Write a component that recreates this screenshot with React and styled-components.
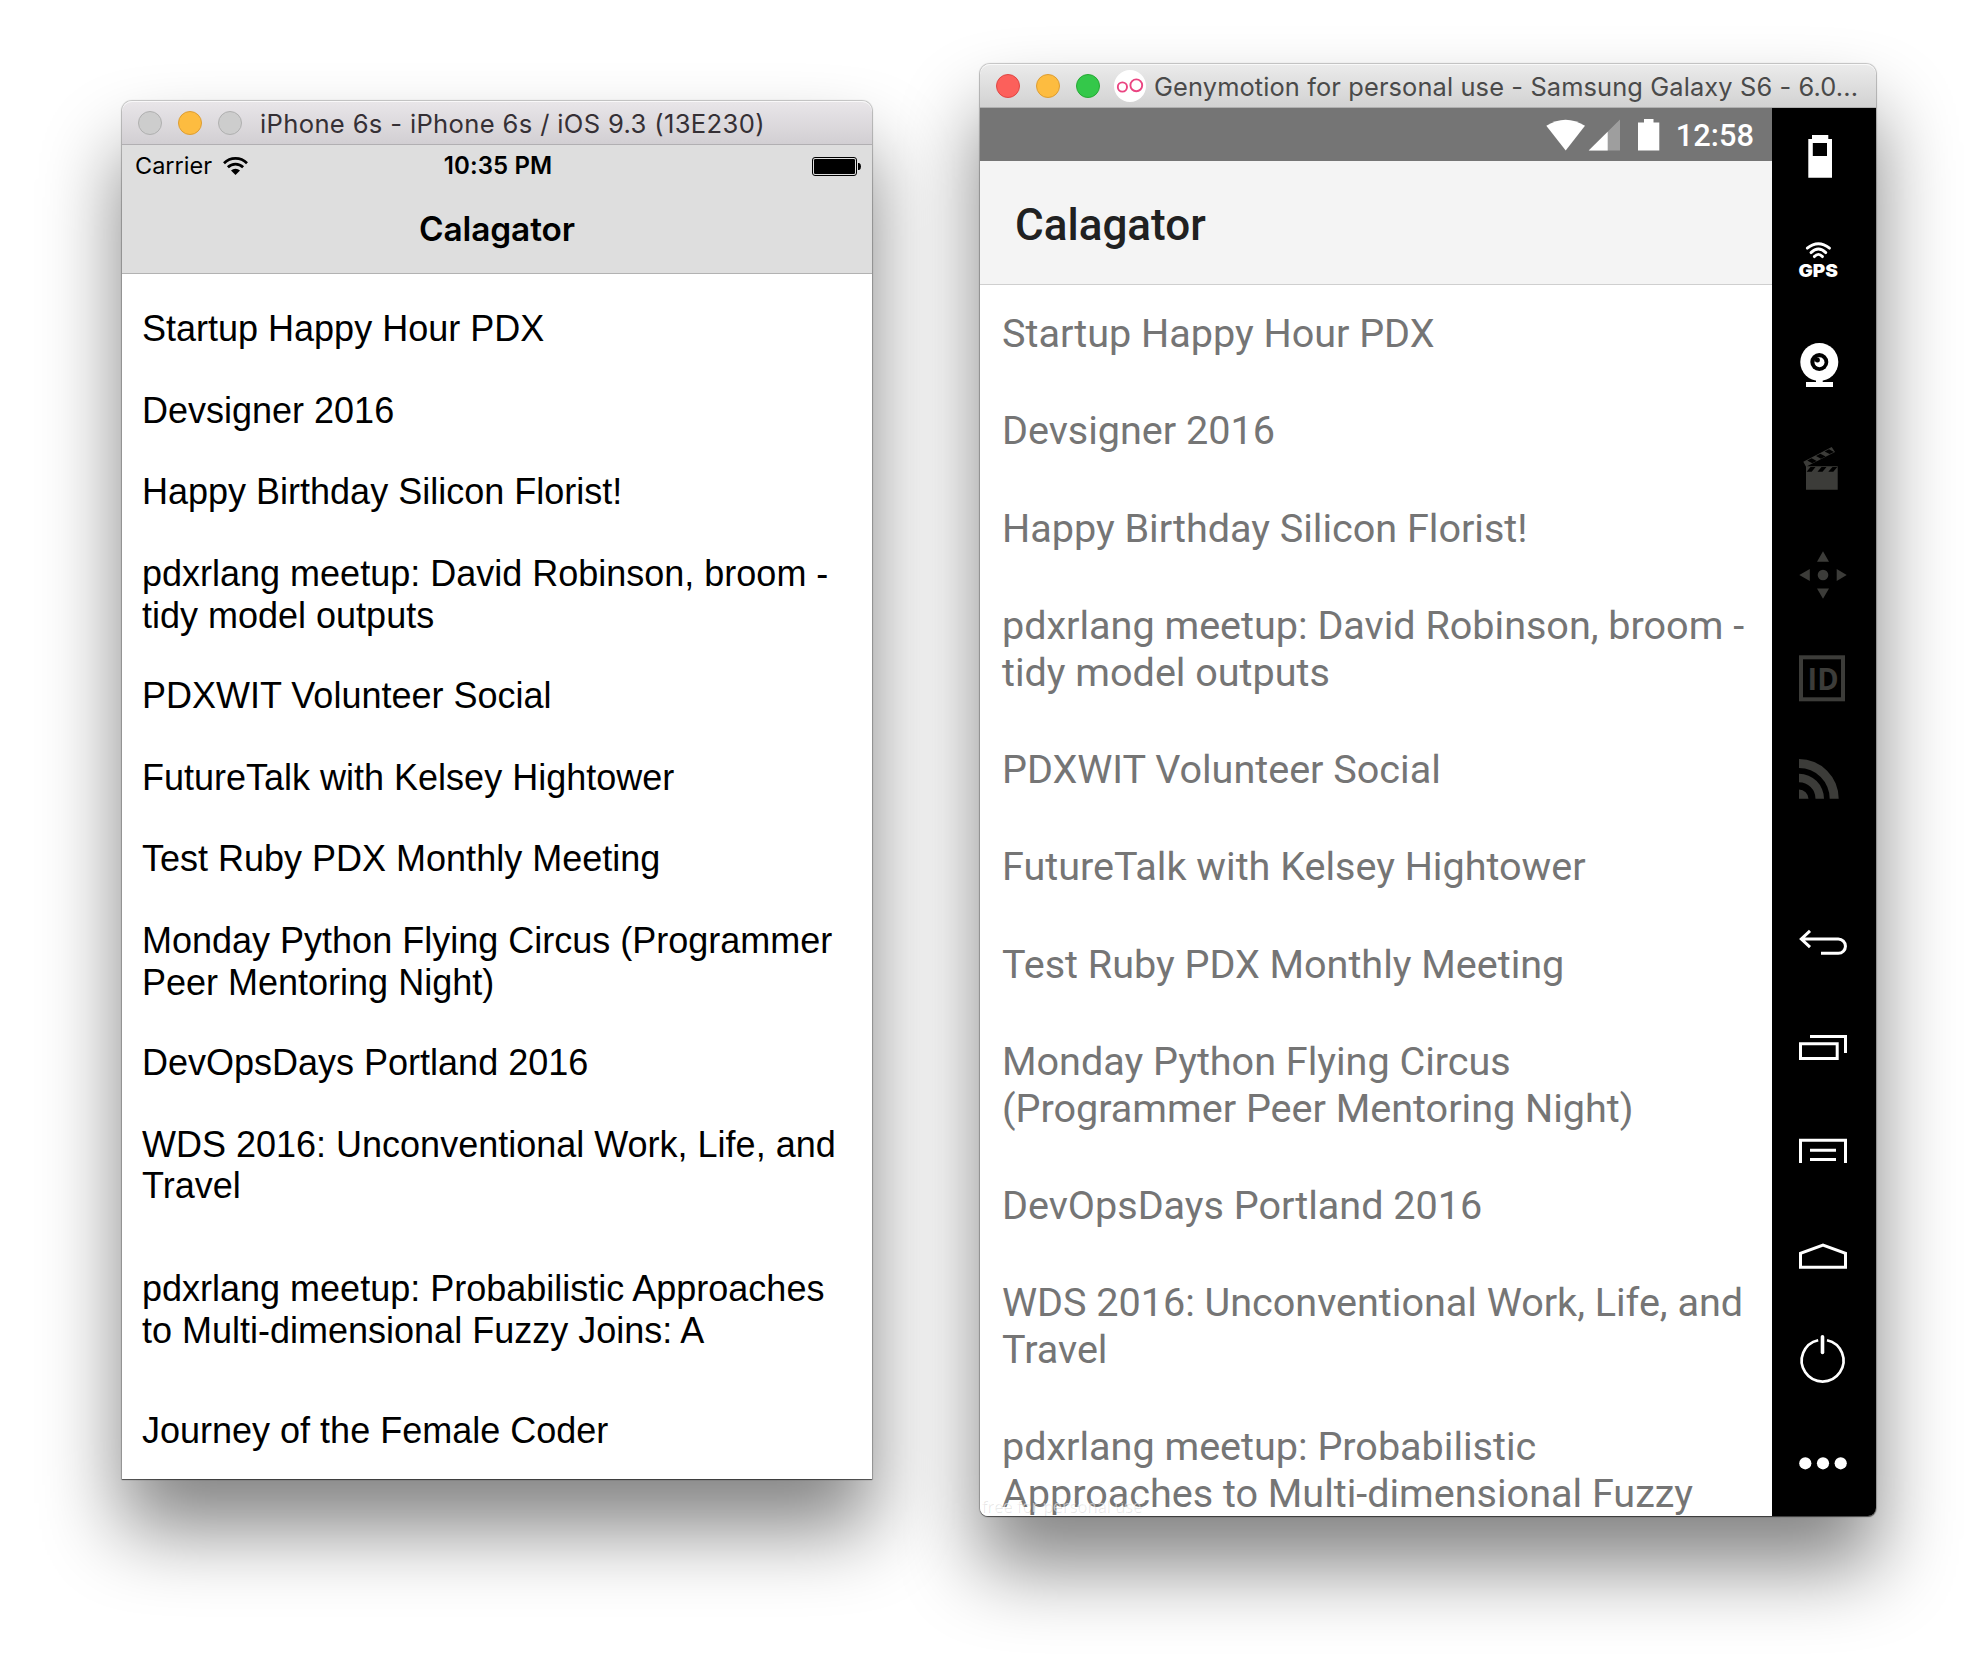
import React from "react";
import styled, { createGlobalStyle } from "styled-components";

const GlobalStyle = createGlobalStyle`
  * { box-sizing: border-box; }
  body { margin: 0; background: #fff; overflow: hidden; }
`;

const Desktop = styled.main`
  display: flex;
  align-items: flex-start;
  gap: 108px;
  width: 1988px;
  height: 1676px;
  padding: 64px 112px 0 122px;
  overflow: hidden;
  background: #fff;
`;

const Window = styled.section`
  flex: none;
  width: ${(p) => p.$width}px;
  margin-top: ${(p) => p.$drop || 0}px;
  border-radius: ${(p) => p.$radius};
  box-shadow:
    0 0 1px 1px rgba(0, 0, 0, 0.22),
    0 1px 1px rgba(0, 0, 0, 0.5),
    0 50px 80px rgba(0, 0, 0, 0.49);
`;

const TitleBar = styled.header`
  display: flex;
  align-items: center;
  height: 44px;
  padding-left: 16px;
  border-radius: 10px 10px 0 0;
  border-bottom: 1px solid ${(p) => p.$line};
  background: ${(p) => p.$fill};
  box-shadow: inset 0 1px 0 rgba(255, 255, 255, 0.7);
`;

const Lights = styled.div`
  display: flex;
  gap: 16px;
`;

const Light = styled.span`
  width: 24px;
  height: 24px;
  border-radius: 50%;
  border: 1px solid ${(p) => p.$edge};
  background: ${(p) => p.$fill};
`;

const WindowTitle = styled.h1`
  margin: 0 0 0 ${(p) => p.$gap}px;
  padding-top: 2px;
  font: 400 ${(p) => p.$size}px/44px Inter, sans-serif;
  letter-spacing: ${(p) => p.$track}px;
  color: ${(p) => p.$color};
  white-space: pre;
`;

const AppBadge = styled.svg`
  width: 32px;
  height: 32px;
  margin-left: 14px;
`;

/* iOS */

const IosScreen = styled.div`
  height: 1334px;
  overflow: hidden;
  background: #fff;
`;

const IosTop = styled.div`
  height: 129px;
  border-bottom: 1px solid #b2b2b2;
  background: #dedede;
  color: #000;
  font-family: Inter, sans-serif;
`;

const IosStatus = styled.div`
  display: grid;
  grid-template-columns: 1fr auto 1fr;
  align-items: center;
  height: 40px;
  padding: 1px 11px 0 13px;
`;

const Carrier = styled.div`
  display: flex;
  align-items: center;
  gap: 11px;
  font-size: 23.5px;
  line-height: 40px;
  letter-spacing: 0;
`;

const IosTime = styled.time`
  font-size: 24px;
  font-weight: 600;
  line-height: 40px;
  letter-spacing: 0.1px;
`;

const IosBattery = styled.svg`
  justify-self: end;
  width: 49px;
  height: 19px;
`;

const IosNavTitle = styled.h2`
  margin: 0;
  font-size: 33.4px;
  font-weight: 600;
  line-height: 88px;
  letter-spacing: -0.1px;
  text-align: center;
`;

const IosList = styled.ul`
  margin: 0;
  padding: 34px 20px 0;
  list-style: none;
`;

const IosRow = styled.li`
  height: ${(p) => p.$height}px;
  font: 400 36px/41.8px "Liberation Sans", Arial, sans-serif;
  color: #000;
  white-space: pre;
`;

/* Android */

const AndroidBody = styled.div`
  display: flex;
  height: 1408px;
  overflow: hidden;
  border-radius: 0 0 8px 8px;
`;

const AndroidScreen = styled.div`
  position: relative;
  width: 792px;
  overflow: hidden;
  background: #fff;
  font-family: Roboto, sans-serif;
`;

const AndroidStatus = styled.div`
  display: flex;
  align-items: center;
  justify-content: flex-end;
  height: 53px;
  padding-right: 18px;
  background: #757575;
  color: #fff;
`;

const StatusIcons = styled.svg`
  width: 114px;
  height: 32px;
  margin-right: 16px;
`;

const AndroidTime = styled.time`
  padding-top: 2px;
  font-size: 30.8px;
  font-weight: 500;
  line-height: 51px;
`;

const AndroidToolbar = styled.h2`
  height: 124px;
  margin: 0;
  padding: 3px 0 0 35px;
  border-bottom: 1px solid #cfcfcf;
  background: #f4f4f4;
  color: #212121;
  font-size: 44px;
  font-weight: 500;
  line-height: 122px;
`;

const AndroidList = styled.ul`
  margin: 0;
  padding: 26px 22px 0;
  list-style: none;
`;

const AndroidRow = styled.li`
  height: ${(p) => p.$height}px;
  font-size: 39.6px;
  line-height: 46.7px;
  letter-spacing: -0.02px;
  color: #757575;
  white-space: pre;
`;

const Watermark = styled.span`
  position: absolute;
  left: 1px;
  bottom: 0;
  font: 400 16.5px/20px "Open Sans", sans-serif;
  color: rgba(255, 255, 255, 0.55);
  text-shadow: 1px 1px 0 rgba(0, 0, 0, 0.1);
`;

const Sidebar = styled.nav`
  display: flex;
  flex-direction: column;
  justify-content: space-between;
  width: 104px;
  background: #000;
`;

const ButtonGroup = styled.div`
  display: flex;
  flex-direction: column;
`;

const ToolIcon = styled.svg`
  display: block;
  width: 104px;
  height: 104px;
  color: ${(p) => (p.$dim ? "#3c3c39" : "#fff")};
  fill: currentColor;
`;

const LineIcon = styled(ToolIcon)`
  fill: none;
  stroke: currentColor;
  stroke-width: 3;
`;

const GlyphText = styled.text`
  font-family: ${(p) => p.$family}, sans-serif;
  font-size: ${(p) => p.$size}px;
  font-weight: ${(p) => p.$weight};
`;

const iosEvents = [
  ["Startup Happy Hour PDX", 81.7],
  ["Devsigner 2016", 81.6],
  ["Happy Birthday Silicon Florist!", 81.8],
  ["pdxrlang meetup: David Robinson, broom -\ntidy model outputs", 122],
  ["PDXWIT Volunteer Social", 81.6],
  ["FutureTalk with Kelsey Hightower", 81.6],
  ["Test Ruby PDX Monthly Meeting", 81.7],
  ["Monday Python Flying Circus (Programmer\nPeer Mentoring Night)", 122],
  ["DevOpsDays Portland 2016", 81.6],
  ["WDS 2016: Unconventional Work, Life, and\nTravel", 144.3],
  ["pdxrlang meetup: Probabilistic Approaches\nto Multi-dimensional Fuzzy Joins: A", 142],
  ["Journey of the Female Coder", 81.6],
];

const androidEvents = [
  ["Startup Happy Hour PDX", 97.3],
  ["Devsigner 2016", 97.3],
  ["Happy Birthday Silicon Florist!", 97.3],
  ["pdxrlang meetup: David Robinson, broom -\ntidy model outputs", 144],
  ["PDXWIT Volunteer Social", 97.3],
  ["FutureTalk with Kelsey Hightower", 97.4],
  ["Test Ruby PDX Monthly Meeting", 97.3],
  ["Monday Python Flying Circus\n(Programmer Peer Mentoring Night)", 144],
  ["DevOpsDays Portland 2016", 97.3],
  ["WDS 2016: Unconventional Work, Life, and\nTravel", 144.2],
  ["pdxrlang meetup: Probabilistic\nApproaches to Multi-dimensional Fuzzy", 144],
];

function IosWindow() {
  return (
    <Window $width={750} $drop={37} $radius="10px 10px 0 0">
      <TitleBar $fill="linear-gradient(#e9e6e9, #d2cfd3)" $line="#b1afb2">
        <Lights>
          <Light $fill="#cdcdcd" $edge="#b0b0b0" />
          <Light $fill="#fdbc40" $edge="#dd9d33" />
          <Light $fill="#cdcdcd" $edge="#b0b0b0" />
        </Lights>
        <WindowTitle $gap={18} $size={25.6} $track={0.34} $color="#353035">
          iPhone 6s - iPhone 6s / iOS 9.3 (13E230)
        </WindowTitle>
      </TitleBar>
      <IosScreen>
        <IosTop>
          <IosStatus>
            <Carrier>
              Carrier
              <svg width="25" height="19" viewBox="0 0 25 19">
                <g fill="none" stroke="#000" strokeWidth="2.7">
                  <path d="M1 6.2a16.3 16.3 0 0 1 23 0" />
                  <path d="M4.9 10.3a10.8 10.8 0 0 1 15.2 0" />
                </g>
                <path d="M8 13.5a6.4 6.4 0 0 1 9 0L12.5 18z" />
              </svg>
            </Carrier>
            <IosTime>10:35 PM</IosTime>
            <IosBattery viewBox="0 0 49 19">
              <rect x="0.5" y="0.5" width="44" height="18" rx="2.5" fill="none" stroke="#000" />
              <rect x="2" y="2" width="41" height="15" rx="1.2" />
              <path d="M46 6h1.2q1.8 0.6 1.8 3.5t-1.8 3.5H46z" />
            </IosBattery>
          </IosStatus>
          <IosNavTitle>Calagator</IosNavTitle>
        </IosTop>
        <IosList>
          {iosEvents.map(([text, height]) => (
            <IosRow key={text} $height={height}>{text}</IosRow>
          ))}
        </IosList>
      </IosScreen>
    </Window>
  );
}

function EmulatorTools() {
  return (
    <Sidebar>
      <ButtonGroup>
        <ToolIcon viewBox="0 0 104 104">
          <path fillRule="evenodd" d="M40 27h16.3v4H60v38.7H36.3V31H40zM40.8 35v13H55V35z" />
        </ToolIcon>
        <ToolIcon viewBox="0 0 104 104">
          <g fill="none" stroke="currentColor" strokeWidth="2.9" strokeLinecap="round">
            <path d="M35.3 36.2q11-9 22.2 0" />
            <path d="M39 40.6q7.4-7 14.8 0" />
            <path d="M42.4 44.6q4-4.4 8 0" />
          </g>
          <GlyphText x="26.5" y="65.2" $family="Inter" $size={17.8} $weight={900} textLength="39.5" lengthAdjust="spacingAndGlyphs">GPS</GlyphText>
        </ToolIcon>
        <ToolIcon viewBox="0 0 104 104">
          <circle cx="47.3" cy="46" r="19" />
          <path d="M44 62h6.7v4H61v5H34v-5h10z" />
          <circle cx="47.3" cy="46" r="9" fill="#000" />
          <circle cx="47.5" cy="46.2" r="5" />
          <circle cx="45.4" cy="43.9" r="2.5" fill="#000" />
        </ToolIcon>
        <ToolIcon $dim viewBox="0 0 104 104">
          <path d="M34 46.3h31.7v23.4H34zM31.3 41.7L59.7 27l3.3 5L34 46.7z" />
          <g fill="#000">
            <path d="M38.5 47h5l-3.8 4.7h-5zM49.5 47h5l-4 4.7h-5zM60.5 47h4.8l-4 4.7h-5z" />
            <path d="M35.2 40.5l4.4-2.3 5.2 2.7-4.6 2.3zM44 36l4.4-2.3 5.2 2.7-4.6 2.3zM52.6 31.5l4.4-2.3 5 2.7-4.4 2.2z" />
          </g>
        </ToolIcon>
        <ToolIcon $dim viewBox="0 0 104 104">
          <circle cx="51" cy="51" r="5.3" />
          <path d="M51 27.3l6 10.4H45zM51 74.7l6-10.3H45zM27.3 51l10.5-6v12zM74.7 51l-10-6v12z" />
        </ToolIcon>
        <ToolIcon $dim viewBox="0 0 104 104">
          <rect x="29" y="29.3" width="42" height="42" fill="none" stroke="currentColor" strokeWidth="4" />
          <GlyphText x="35.6" y="62.3" $family="'Open Sans'" $size={31} $weight={700} textLength="31" lengthAdjust="spacingAndGlyphs">ID</GlyphText>
        </ToolIcon>
        <ToolIcon $dim viewBox="0 0 104 104">
          <path d="M27 27a39.7 39.7 0 0 1 39.7 39.7h-9A30.7 30.7 0 0 0 27 36zM27 41.8a25 25 0 0 1 25 24.9h-8.5A16.5 16.5 0 0 0 27 50.3zM27 57.5a9.5 9.5 0 0 1 9.5 9.2H27z" />
        </ToolIcon>
      </ButtonGroup>
      <ButtonGroup>
        <LineIcon viewBox="0 0 104 104">
          <path d="M29 47h37.3a7.1 7.1 0 0 1 0 14.3H49M38 38.8L29.3 47l8.7 8.2" />
        </LineIcon>
        <LineIcon viewBox="0 0 104 104">
          <path d="M38 40.4h35.5V57M28.5 47.8h36.7v14.7H28.5z" />
        </LineIcon>
        <LineIcon viewBox="0 0 104 104">
          <path d="M28.5 63V40.2h45V63M38 50.3h26M38 59.4h26" />
        </LineIcon>
        <LineIcon viewBox="0 0 104 104">
          <path d="M28.5 63.2V49.3L51 41l22.5 8.3v13.9z" />
        </LineIcon>
        <LineIcon viewBox="0 0 104 104">
          <path d="M55 32.2a20.9 20.9 0 1 1-8.8 0" strokeWidth="2.7" />
          <path d="M50.5 28.8v15.7" strokeWidth="3.6" strokeLinecap="round" />
        </LineIcon>
        <ToolIcon viewBox="0 0 104 104">
          <circle cx="33.3" cy="51.3" r="6.1" />
          <circle cx="51" cy="51.3" r="6.1" />
          <circle cx="68.7" cy="51.3" r="6.1" />
        </ToolIcon>
      </ButtonGroup>
    </Sidebar>
  );
}

function AndroidWindow() {
  return (
    <Window $width={896} $radius="10px 10px 8px 8px">
      <TitleBar $fill="linear-gradient(#ebebeb, #d2d2d2)" $line="#b0b0b0">
        <Lights>
          <Light $fill="#fc605b" $edge="#df4744" />
          <Light $fill="#fdbc40" $edge="#dd9d33" />
          <Light $fill="#34c84a" $edge="#26a934" />
        </Lights>
        <AppBadge viewBox="0 0 32 32">
          <circle cx="16" cy="16" r="16" fill="#fff" />
          <g fill="none" stroke="#ea4481" strokeWidth="1.9">
            <circle cx="8.4" cy="17" r="4.6" />
            <circle cx="22.3" cy="15.3" r="5.9" />
          </g>
        </AppBadge>
        <WindowTitle $gap={8} $size={25.4} $track={0.12} $color="#4a4a4a">
          Genymotion for personal use - Samsung Galaxy S6 - 6.0...
        </WindowTitle>
      </TitleBar>
      <AndroidBody>
        <AndroidScreen>
          <AndroidStatus>
            <StatusIcons viewBox="0 0 114 32">
              <g fill="#fff">
                <path d="M0.3 6.8Q19.5-5.5 39 6.8L19.7 31.5z" />
                <path d="M74 0.5V31.5H42.7z" opacity="0.3" />
                <path d="M61.7 12.7V31.5H42.7z" />
                <path d="M98 0h9.5v3.5h5.8v28H92V3.5h6z" />
              </g>
            </StatusIcons>
            <AndroidTime>12:58</AndroidTime>
          </AndroidStatus>
          <AndroidToolbar>Calagator</AndroidToolbar>
          <AndroidList>
            {androidEvents.map(([text, height]) => (
              <AndroidRow key={text} $height={height}>{text}</AndroidRow>
            ))}
          </AndroidList>
          <Watermark>free for personal use</Watermark>
        </AndroidScreen>
        <EmulatorTools />
      </AndroidBody>
    </Window>
  );
}

export default function App() {
  return (
    <>
      <GlobalStyle />
      <Desktop>
        <IosWindow />
        <AndroidWindow />
      </Desktop>
    </>
  );
}
